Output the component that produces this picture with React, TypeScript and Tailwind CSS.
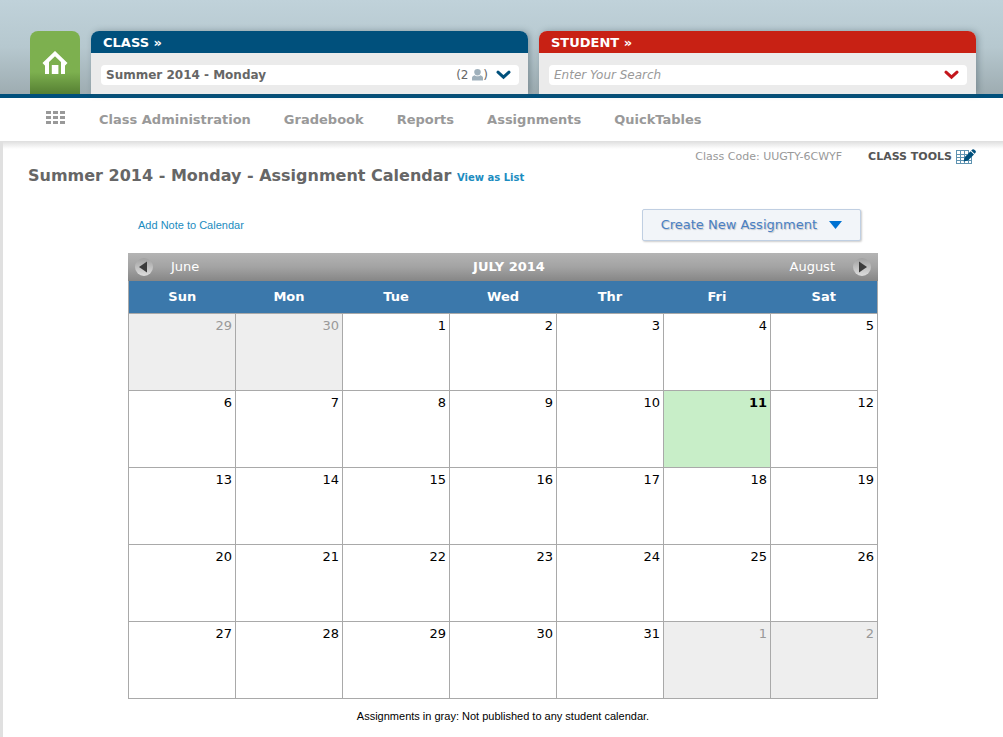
import {FC} from "react";

const navLinks = ["Class Administration", "Gradebook", "Reports", "Assignments", "QuickTables"];

const weekDays = ["Sun", "Mon", "Tue", "Wed", "Thr", "Fri", "Sat"];

const weeks = [
    [29, 30, 1, 2, 3, 4, 5],
    [6, 7, 8, 9, 10, 11, 12],
    [13, 14, 15, 16, 17, 18, 19],
    [20, 21, 22, 23, 24, 25, 26],
    [27, 28, 29, 30, 31, 1, 2],
];

const TODAY = 11;

const isOutside = (week: number, day: number) =>
    (week === 0 && day > 7) || (week === 4 && day < 7);

const cellColor = (week: number, day: number) => {
    if (isOutside(week, day)) return "bg-[#eeeeee] text-[#999999]";
    if (day === TODAY) return "bg-[#c8eec8] font-bold text-black";
    return "bg-white text-black";
};

const HomeIcon: FC = () => (
    <svg width="26" height="24" viewBox="0 0 26 24" aria-hidden="true">
        <path d="M1.8 13.4 13 2.6 24.2 13.4" fill="none" stroke="#fff" strokeWidth="3.8"/>
        <path d="M3 12 7 9V23H3zM23 12 19 9V23H23z" fill="#fff"/>
        <path d="M9.8 14h6.6v9H9.8z" fill="#fff"/>
    </svg>
);

const Chevron: FC<{color: string}> = ({color}) => (
    <svg width="15" height="10" viewBox="0 0 15 10" aria-hidden="true">
        <path d="M2 2.2 7.5 7.2 13 2.2" fill="none" stroke={color} strokeWidth="3" strokeLinecap="round"/>
    </svg>
);

const PersonIcon: FC = () => (
    <svg width="11" height="12" viewBox="0 0 10 12" preserveAspectRatio="none" fill="#9fb0bb" aria-hidden="true">
        <path d="M5 0C7 0 8 1.3 8 3.1S6.9 6.6 5 6.6 2 4.9 2 3.1 3 0 5 0z"/>
        <path d="M0 11.4V8.8C0 7.4 1 6.6 2.4 6.2 3.2 7 4 7.3 5 7.3s1.8-.3 2.6-1.1C9 6.6 10 7.4 10 8.8v2.6z"/>
    </svg>
);

const MenuIcon: FC = () => (
    <svg width="19" height="13" viewBox="0 0 19 13" fill="#999" aria-hidden="true">
        {[0, 5, 10].map((y) =>
            [0, 7, 14].map((x) => <rect key={`${x}-${y}`} x={x} y={y} width="5" height="3"/>)
        )}
    </svg>
);

const ToolsIcon: FC = () => (
    <svg width="20" height="16" viewBox="0 0 20 16" aria-hidden="true">
        <path
            d="M.5 1v14M4.5 1v14M8.5 1v14M12.5 1v14M15.5 7v8M0 1.5h13M0 5.5h11M0 8.5h9M0 11.5h16M0 14.5h16"
            fill="none" stroke="#5f93b1" strokeWidth="1"
        />
        <path d="M7.6 12.4 8.8 8 14.6 2.2 18 5.4 12 11.4z" fill="#00507c"/>
        <path d="M15.2 1.6 16.4.5Q17.2 0 18 .5L19.6 1.8Q20.2 2.6 19.6 3.4L18.6 4.7z" fill="#00507c"/>
    </svg>
);

const MonthArrow: FC<{next?: boolean}> = ({next}) => (
    <svg width="18" height="18" viewBox="0 0 18 18" aria-hidden="true">
        <defs>
            <linearGradient id={next ? "arrowNext" : "arrowPrev"} x1="0" y1="0" x2="0" y2="1">
                <stop offset="0" stopColor="#a0a0a0"/>
                <stop offset="1" stopColor="#dedede"/>
            </linearGradient>
        </defs>
        <circle cx="9" cy="9" r="9" fill={next ? "url(#arrowNext)" : "url(#arrowPrev)"}/>
        <path d={next ? "M6 3.5v11l8-5.5z" : "M12 3.5v11L4 9z"} fill="#3c3c3c"/>
    </svg>
);

const Header: FC = () => (
    <header className="flex items-end gap-[11px] h-[98px] pl-[30px] pr-[27px] border-b-4 border-[#00507c] bg-linear-to-b from-[#c0d2da] via-[#b6c8cf] to-[#9eacb1]">
        <a href="#home" aria-label="Home"
            className="flex items-center justify-center w-[50px] h-[63px] rounded-t-lg bg-linear-to-b from-[#7db04f] from-65% to-[#568033]">
            <HomeIcon/>
        </a>
        <section className="flex-1 h-[63px] rounded-t-lg bg-[#ebebeb] shadow-[2px_0_6px_rgba(60,80,90,0.4)]">
            <h2 className="h-[22px] pl-3 rounded-t-lg bg-[#00507c] text-[13px] leading-[23px] font-bold text-white">CLASS »</h2>
            <button className="flex items-center w-[418px] max-w-full h-5 mt-3 ml-[10px] pl-[5px] pr-2 rounded bg-white text-[12px] text-[#666666]">
                <span className="grow text-left font-bold">Summer 2014 - Monday</span>
                <span className="flex items-center">(2&nbsp;<PersonIcon/>)</span>
                <span className="ml-2"><Chevron color="#00507c"/></span>
            </button>
        </section>
        <section className="flex-1 h-[63px] rounded-t-lg bg-[#ebebeb] shadow-[2px_0_6px_rgba(60,80,90,0.4)]">
            <h2 className="h-[22px] pl-3 rounded-t-lg bg-[#c82114] text-[13px] leading-[23px] font-bold text-white">STUDENT »</h2>
            <div className="flex items-center w-[418px] max-w-full h-5 mt-3 ml-[10px] pl-[5px] pr-2 rounded bg-white">
                <input type="text" aria-label="Student search" placeholder="Enter Your Search"
                    className="grow h-5 text-[12px] italic outline-none placeholder:text-[#999999]"/>
                <button aria-label="Search students"><Chevron color="#c4161c"/></button>
            </div>
        </section>
    </header>
);

const Nav: FC = () => (
    <nav className="flex items-center h-[43px] pl-[46px] bg-white text-[13px] font-bold text-[#999999]">
        <button aria-label="All sections" className="mr-[34px] pb-1"><MenuIcon/></button>
        <div className="flex gap-[33px]">
            {navLinks.map((link) => <a key={link} href={`#${link}`}>{link}</a>)}
        </div>
    </nav>
);

const Calendar: FC = () => (
    <div>
        <div className="flex items-center justify-between h-7 px-[7px] bg-linear-to-b from-[#b4b4b4] via-[#a3a3a3] to-[#868686] text-[13px] text-white">
            <button className="flex flex-1 items-center gap-[18px]"><MonthArrow/>June</button>
            <h2 className="pl-3 font-bold">JULY 2014</h2>
            <button className="flex flex-1 items-center justify-end gap-[18px]">August<MonthArrow next/></button>
        </div>
        <table className="w-full table-fixed border-collapse text-[13px]">
            <thead>
                <tr className="h-8 border-x border-[#a9a9a9] bg-[#3b78ab] text-white">
                    {weekDays.map((day) => <th key={day} className="font-bold">{day}</th>)}
                </tr>
            </thead>
            <tbody>
                {weeks.map((days, week) => (
                    <tr key={week} className="h-[77px]">
                        {days.map((day) => (
                            <td key={day} className={`border border-[#a9a9a9] pt-[2px] pr-[3px] text-right align-top ${cellColor(week, day)}`}>
                                {day}
                            </td>
                        ))}
                    </tr>
                ))}
            </tbody>
        </table>
    </div>
);

const App: FC = () => {
    return (
        <div className="min-h-screen bg-white font-['Verdana','DejaVu_Sans',sans-serif]">
            <Header/>
            <Nav/>
            <main className="min-h-[596px] border-l-3 border-[#e0e0e0] pb-3">
                <div className="h-2 bg-linear-to-b from-[#dedede] to-white"/>
                <div className="flex items-start justify-between pl-[25px] pr-[27px]">
                    <h1 className="pt-[17px] text-[16px] leading-5 font-bold text-[#666666]">
                        Summer 2014 - Monday - Assignment Calendar{" "}
                        <a href="#list" className="text-[10px] text-[#1c8cc0]">View as List</a>
                    </h1>
                    <div className="flex items-center text-[11px] leading-4">
                        <span className="mr-[26px] text-[#999999]">Class Code: UUGTY-6CWYF</span>
                        <button className="flex items-center gap-1 font-bold text-[#555555]">CLASS TOOLS <ToolsIcon/></button>
                    </div>
                </div>
                <div className="w-[750px] mx-auto">
                    <div className="flex items-center justify-between h-8 mt-[21px] mb-3 pl-[10px] pr-[17px]">
                        <a href="#note" className="font-['Liberation_Sans',Arial,sans-serif] text-[11px] text-[#1c8cc0]">Add Note to Calendar</a>
                        <button className="flex items-center gap-3 h-8 px-[18px] rounded-xs border border-[#c0cfe2] bg-[#f2f5f9] text-[13px] text-[#4a80c4] shadow-[1px_1px_2px_rgba(0,0,0,0.2)] text-shadow-[1px_1px_1px_rgba(0,0,0,0.2)]">
                            Create New Assignment
                            <svg width="13" height="8" viewBox="0 0 13 8" fill="#0072d2" aria-hidden="true"><path d="M0 0h13L6.5 8z"/></svg>
                        </button>
                    </div>
                    <Calendar/>
                    <p className="mt-[9px] text-center font-['Liberation_Sans',Arial,sans-serif] text-[11px] leading-4 text-black">
                        Assignments in gray: Not published to any student calendar.
                    </p>
                </div>
            </main>
        </div>
    )
}
export default App
